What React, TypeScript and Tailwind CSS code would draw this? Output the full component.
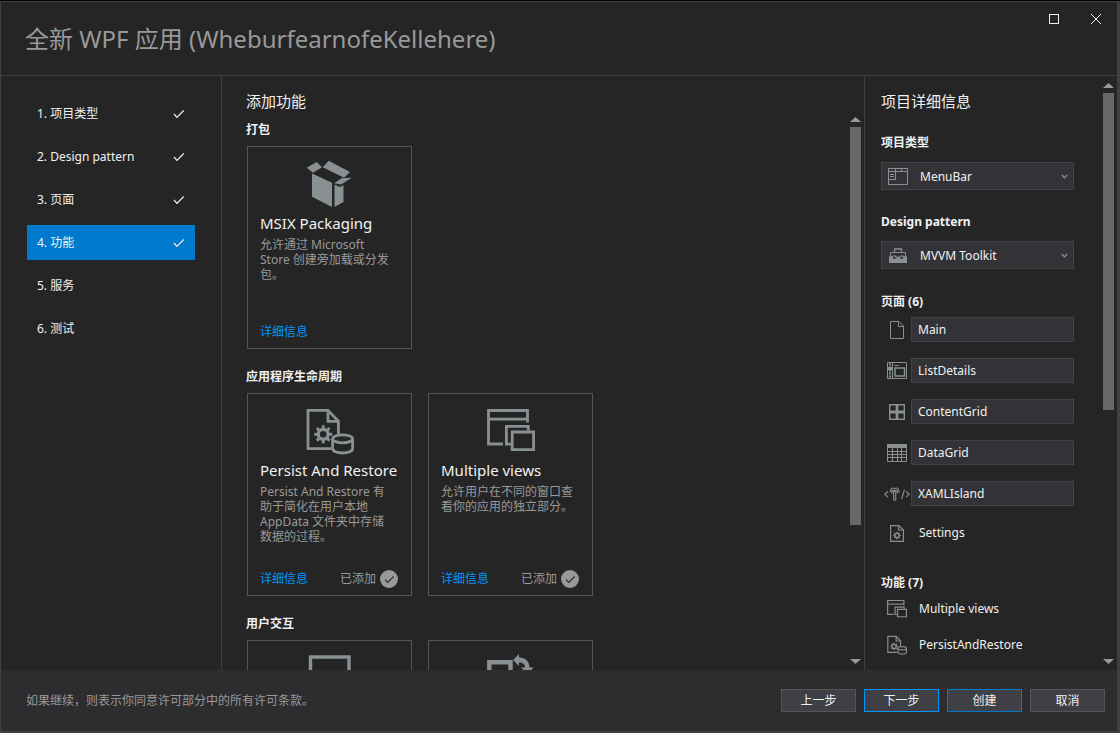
import type { ReactNode } from "react";

type IconProps = { className?: string };

function Gear({ cx, cy, r }: { cx: number; cy: number; r: number }) {
  const teeth = Array.from({ length: 8 }, (_, i) => i * 45);
  return (
    <g>
      <circle cx={cx} cy={cy} r={r * 0.55} fill="none" stroke="currentColor" strokeWidth={r * 0.36} />
      {teeth.map((a) => (
        <rect
          key={a}
          x={cx - r * 0.16}
          y={cy - r}
          width={r * 0.32}
          height={r * 0.4}
          fill="currentColor"
          transform={`rotate(${a} ${cx} ${cy})`}
        />
      ))}
    </g>
  );
}

function PackageIcon({ className }: IconProps) {
  return (
    <svg viewBox="0 0 48 48" className={className} fill="currentColor" aria-hidden="true">
      <path d="M0.7 7.7 10.7 2 16 7.3 7 12.7Z" />
      <path d="M22.7 0.7 44 12 38 17.7 16.8 7.3Z" />
      <path d="M6 13.6 26 22.8V47L6 36.7Z" />
      <path d="M46 17.7 35.5 18.3 28 23.2 35 24.5Z" />
      <path d="M28.5 24.6 33.5 27 37.5 25.3V42L28.5 47Z" />
    </svg>
  );
}

function PersistIcon({ className }: IconProps) {
  return (
    <svg viewBox="0 0 48 48" className={className} fill="none" stroke="currentColor" strokeWidth="2.8" aria-hidden="true">
      <path d="M25 41.6H2V3.4H22L32.4 14V27" />
      <path d="M22 3.4V14.4H32.4" />
      <ellipse cx="36.6" cy="31.8" rx="10" ry="4" />
      <path d="M26.6 31.8V41.5C26.6 44.3 31 46 36.6 46S46.6 44.3 46.6 41.5V31.8" />
      <g stroke="none">
        <Gear cx={17.2} cy={27.3} r={9} />
      </g>
    </svg>
  );
}

function ViewsIcon({ className }: IconProps) {
  return (
    <svg viewBox="0 0 48 48" className={className} fill="none" stroke="currentColor" strokeWidth="2.8" aria-hidden="true">
      <path d="M16 37H1.5V3.5H40.5V15.5" />
      <path d="M1.5 12.2H40.5" />
      <path d="M24 37.2H19.4V19.4H41.3V23.5" />
      <path d="M25.2 25H46.6V42.6H25.2Z" />
    </svg>
  );
}

function FrameIcon({ className }: IconProps) {
  return (
    <svg viewBox="0 0 48 48" className={className} fill="none" stroke="currentColor" strokeWidth="3.4" aria-hidden="true">
      <path d="M4.5 46V3H43V46Z" />
    </svg>
  );
}

function RotateIcon({ className }: IconProps) {
  return (
    <svg viewBox="0 0 48 48" className={className} aria-hidden="true">
      <path d="M2.3 46V8.2H23.5V46Z" fill="none" stroke="currentColor" strokeWidth="4.4" />
      <path d="M26 6 32 0V3.5C38.5 3.5 42.5 7.5 42.5 13.5H46.5L40.5 20 34 13.5H38C38 10.5 36 8.5 32 8.5V12Z" fill="currentColor" />
    </svg>
  );
}

function MenuBarIcon({ className }: IconProps) {
  return (
    <svg viewBox="0 0 20 17" className={className} fill="none" stroke="currentColor" aria-hidden="true">
      <path d="M0.5 0.5H19.5V16.5H0.5ZM0.5 3.5H19.5M7.5 0.5V11.5H0.5M13.5 0.5V3.5M2 6.5H6M2 8.5H6" />
    </svg>
  );
}

function ToolboxIcon({ className }: IconProps) {
  return (
    <svg viewBox="0 0 18 15" className={className} aria-hidden="true">
      <path d="M5.5 4V1H12.5V4" fill="none" stroke="currentColor" strokeWidth="1.3" />
      <path d="M1.500 4.500H16.500V9H14.500V8H11.500V9H6.500V8H3.500V9H1.500Z" fill="none" stroke="currentColor" />
      <path d="M0 8.5H3.5L4.5 11H6L7 9.500H11L12 11H13.5L14.5 8.500H18V15H0Z" fill="currentColor" />
    </svg>
  );
}

function PageIcon({ className }: IconProps) {
  return (
    <svg viewBox="0 0 14 18" className={className} fill="none" stroke="currentColor" aria-hidden="true">
      <path d="M0.5 0.5H9L13.5 5V17.5H0.5ZM8.5 0.5V5.5H13.5" />
    </svg>
  );
}

function ListDetailsIcon({ className }: IconProps) {
  return (
    <svg viewBox="0 0 20 17" className={className} fill="none" stroke="currentColor" aria-hidden="true">
      <path d="M0.5 0.5H19.5V16.5H0.5ZM5.5 0.5V16.5M7.500 3.500H12" />
      <path d="M8 6H17.5V14H8Z" strokeWidth="1.5" />
      <path d="M1 6.5H5" strokeWidth="3" />
      <path d="M3 1.5V16" strokeWidth="2" strokeDasharray="2 1" />
    </svg>
  );
}

function ContentGridIcon({ className }: IconProps) {
  return (
    <svg viewBox="0 0 16 16" className={className} fill="none" stroke="currentColor" strokeWidth="1.4" aria-hidden="true">
      <path d="M0.7 0.7H7.3V7.3H0.7ZM8.700 0.7H15.3V7.3H8.700ZM0.7 8.700H7.3V15.3H0.7ZM8.700 8.700H15.3V15.3H8.700Z" />
    </svg>
  );
}

function DataGridIcon({ className }: IconProps) {
  return (
    <svg viewBox="0 0 20 18" className={className} fill="none" stroke="currentColor" aria-hidden="true">
      <path d="M0 0H20V4H0Z" fill="currentColor" stroke="none" />
      <path d="M0.5 4V17.5H19.5V4M5.5 4V17M10.5 4V17M14.500 4V17M0 7.5H20M0 10.5H20M0 13.500H20" />
    </svg>
  );
}

function IslandIcon({ className }: IconProps) {
  return (
    <svg viewBox="0 0 26 14" className={className} fill="none" stroke="currentColor" strokeWidth="1.1" aria-hidden="true">
      <path d="M4 4.5 0.8 7.3 4 10" />
      <path d="M22 4.5 25.2 7.3 22 10M20.500 2.500 17.500 12" />
      <path d="M10.500 2C9 0 6.500 1 6.300 4.500C8 2.800 9.500 3 10.500 4C11.500 3 13.500 2.800 15 4.500C14.800 1 12.200 0 10.500 2Z" />
      <path d="M7.500 6.500C8 4.500 9.500 4 10.700 4C12 4 13.500 4.500 14 6.500" />
      <path d="M9.700 4.500V13H11.700V4.500" />
    </svg>
  );
}

function SettingsPageIcon({ className }: IconProps) {
  return (
    <svg viewBox="0 0 14 17" className={className} fill="none" stroke="currentColor" aria-hidden="true">
      <path d="M0.6 0.6H9L13.4 5V16.4H0.6ZM8.5 0.6V5H13.4" strokeWidth="1.2" />
      <g stroke="none">
        <Gear cx={7} cy={10.5} r={3.8} />
      </g>
    </svg>
  );
}

function Check({ className }: IconProps) {
  return (
    <svg viewBox="0 0 12 10" className={className} fill="none" stroke="currentColor" strokeWidth="1.2" aria-hidden="true">
      <path d="M1 5 4 8.3 10.7 1.5" />
    </svg>
  );
}

const steps = [
  { label: "1. 项目类型", done: true },
  { label: "2. Design pattern", done: true },
  { label: "3. 页面", done: true },
  { label: "4. 功能", done: true, current: true },
  { label: "5. 服务", done: false },
  { label: "6. 测试", done: false },
];

function ScrollRail({ thumb, className }: { thumb: string; className: string }) {
  return (
    <div className={`flex w-[11px] shrink-0 flex-col items-center ${className}`} aria-hidden="true">
      <svg viewBox="0 0 11 5" className="h-[5px] w-[11px] shrink-0 fill-[#999999]">
        <path d="M5.5 0 11 5H0Z" />
      </svg>
      <div className="my-[5px] min-h-0 w-full flex-1">
        <div className={`w-full bg-[#686868] ${thumb}`} />
      </div>
      <svg viewBox="0 0 11 5" className="h-[5px] w-[11px] shrink-0 fill-[#999999]">
        <path d="M0 0H11L5.5 5Z" />
      </svg>
    </div>
  );
}

function Card({ icon, title, text, added }: { icon: ReactNode; title?: string; text?: string; added?: boolean }) {
  return (
    <article className="flex h-[203px] w-[165px] flex-col border border-[#555555] px-3 pt-[13px] pb-[7px]">
      <div className="flex shrink-0 justify-center text-[#899093]">{icon}</div>
      {title && (
        <>
          <h3 className="mt-[5px] text-[15px] leading-5 whitespace-nowrap text-[#f1f1f1]">{title}</h3>
          <p className="mt-1 pr-[5px] text-[12px] leading-[15px] text-[#999999]">{text}</p>
          <div className="mt-auto flex h-[18px] items-center pr-px text-[12px]">
            <a href="#details" className="text-[#0097fb]">
              详细信息
            </a>
            {added && (
              <span className="ml-auto flex items-center gap-1 text-[#999999]">
                已添加
                <span className="flex size-[18px] items-center justify-center rounded-full bg-[#999999] text-[#252526]">
                  <Check className="h-[9px] w-[11px]" />
                </span>
              </span>
            )}
          </div>
        </>
      )}
    </article>
  );
}

function Section({ title, children }: { title: string; children: ReactNode }) {
  return (
    <section className="mb-[18px]">
      <h2 className="mb-[6px] text-[12px] leading-5 font-bold text-[#f1f1f1]">{title}</h2>
      <div className="flex flex-wrap gap-4 pl-px">{children}</div>
    </section>
  );
}

function Picker({ id, label, value, icon }: { id: string; label: string; value: string; icon: ReactNode }) {
  return (
    <div className="mt-[22px] last:mt-[22px]">
      <label htmlFor={id} className="block text-[12px] leading-5 font-bold">
        {label}
      </label>
      <div className="mt-[9px] flex h-7 items-center border border-[#434346] bg-[#333337] pr-[5px] pl-[6px]">
        <span className="flex w-5 shrink-0 justify-center text-[#899093]">{icon}</span>
        <select id={id} className="ml-3 h-full min-w-0 flex-1 appearance-none bg-transparent pt-px text-[12px] outline-none">
          <option>{value}</option>
        </select>
        <svg viewBox="0 0 7 5" className="h-[5px] w-[7px] fill-none stroke-[#999999]" aria-hidden="true">
          <path d="M0.8 0.8 3.5 3.8 6.2 0.8" strokeWidth="1.2" />
        </svg>
      </div>
    </div>
  );
}

const pages = [
  { name: "Main", icon: <PageIcon className="h-[18px] w-[14px]" /> },
  { name: "ListDetails", icon: <ListDetailsIcon className="h-[17px] w-5" /> },
  { name: "ContentGrid", icon: <ContentGridIcon className="size-4" /> },
  { name: "DataGrid", icon: <DataGridIcon className="h-[18px] w-5" /> },
  { name: "XAMLIsland", icon: <IslandIcon className="h-[14px] w-[26px]" /> },
];

function PlainRow({ icon, name }: { icon: ReactNode; name: string }) {
  return (
    <li className="flex h-[22px] items-center">
      <span className="flex w-[30px] shrink-0 justify-center pl-0.5 text-[#899093]">{icon}</span>
      <span className="pl-2">{name}</span>
    </li>
  );
}

const buttons = [
  { label: "上一步", border: "border-[#555555]" },
  { label: "下一步", border: "border-[#0097fb]" },
  { label: "创建", border: "border-[#007acc]" },
  { label: "取消", border: "border-[#555555]" },
];

export default function App() {
  return (
    <div className="h-screen bg-black pt-px font-['Noto_Sans','Noto_Sans_CJK_SC',sans-serif] text-[12px] text-[#f1f1f1]">
      <div className="flex h-full flex-col border-t border-r-3 border-b-2 border-l border-[#3f3f46] bg-[#252526]">
        <header className="flex h-[74px] shrink-0 items-center border-b border-[#3f3f46] pl-6">
          <h1 className="text-[24px] leading-8 whitespace-nowrap text-[#999999]">全新 WPF 应用 (WheburfearnofeKellehere)</h1>
          <div className="ml-auto flex self-start">
            <button type="button" aria-label="最大化" className="flex h-[34px] w-[42px] items-center justify-center">
              <span className="size-[10px] border border-[#f1f1f1]" />
            </button>
            <button type="button" aria-label="关闭" className="flex h-[34px] w-[42px] items-center justify-center">
              <svg viewBox="0 0 10 10" className="size-[10px] stroke-[#f1f1f1]" aria-hidden="true">
                <path d="M0 0 10 10M10 0 0 10" />
              </svg>
            </button>
          </div>
        </header>

        <div className="flex min-h-0 flex-1">
          <nav className="flex w-[221px] shrink-0 flex-col gap-2 border-r border-[#3f3f46] pt-5 pr-[26px] pl-[26px]">
            {steps.map((s) => (
              <button
                key={s.label}
                type="button"
                aria-current={s.current ? "step" : undefined}
                className={`flex h-[35px] items-center justify-between pr-[10px] pl-[10px] ${s.current ? "bg-[#007acc]" : ""}`}
              >
                {s.label}
                {s.done && <Check className="h-[10px] w-3" />}
              </button>
            ))}
          </nav>

          <main className="flex min-w-0 flex-1 flex-col pt-[15px] pl-6">
            <h2 className="text-[15px] leading-5">添加功能</h2>
            <div className="mt-[6px] flex min-h-0 flex-1">
              <div className="min-w-0 flex-1 overflow-hidden pt-[3px]">
                <Section title="打包">
                  <Card icon={<PackageIcon className="size-12" />} title="MSIX Packaging" text="允许通过 Microsoft Store 创建旁加载或分发包。" />
                </Section>
                <Section title="应用程序生命周期">
                  <Card
                    icon={<PersistIcon className="size-12" />}
                    title="Persist And Restore"
                    text="Persist And Restore 有助于简化在用户本地 AppData 文件夹中存储数据的过程。"
                    added
                  />
                  <Card icon={<ViewsIcon className="size-12" />} title="Multiple views" text="允许用户在不同的窗口查看你的应用的独立部分。" added />
                </Section>
                <Section title="用户交互">
                  <Card icon={<FrameIcon className="size-12" />} />
                  <Card icon={<RotateIcon className="size-12" />} />
                </Section>
              </div>
              <ScrollRail thumb="h-[75.5%]" className="mr-[3px] pb-[6px]" />
            </div>
          </main>

          <aside className="flex w-[253px] shrink-0 border-l border-[#3f3f46] pl-4">
            <div className="min-w-0 flex-1 overflow-hidden pt-[15px] pr-[29px]">
              <h2 className="text-[15px] leading-5">项目详细信息</h2>
              <Picker id="project-type" label="项目类型" value="MenuBar" icon={<MenuBarIcon className="h-[17px] w-5" />} />
              <Picker id="design-pattern" label="Design pattern" value="MVVM Toolkit" icon={<ToolboxIcon className="h-[15px] w-[18px]" />} />
              <h3 className="mt-[23px] mb-[5px] leading-5 font-bold">页面 (6)</h3>
              <ul className="flex flex-col gap-4">
                {pages.map((p) => (
                  <li key={p.name} className="flex h-[25px] items-center">
                    <span className="flex w-[30px] shrink-0 justify-center pl-0.5 text-[#899093]">{p.icon}</span>
                    <input
                      aria-label={p.name}
                      defaultValue={p.name}
                      className="h-full min-w-0 flex-1 border border-[#434346] bg-[#333337] px-[6px] outline-none"
                    />
                  </li>
                ))}
                <PlainRow name="Settings" icon={<SettingsPageIcon className="h-[17px] w-[14px]" />} />
              </ul>
              <h3 className="mt-[29px] mb-[5px] leading-5 font-bold">功能 (7)</h3>
              <ul className="flex flex-col gap-[14px]">
                <PlainRow name="Multiple views" icon={<ViewsIcon className="size-5" />} />
                <PlainRow name="PersistAndRestore" icon={<PersistIcon className="size-5" />} />
              </ul>
            </div>
            <ScrollRail thumb="h-[56.5%]" className="mr-[3px] pt-[7px] pb-[6px]" />
          </aside>
        </div>

        <footer className="flex h-[61px] shrink-0 items-center bg-[#2d2d30] pr-3 pl-[25px]">
          <p className="text-[#999999]">如果继续，则表示你同意许可部分中的所有许可条款。</p>
          <div className="ml-auto flex gap-2">
            {buttons.map((b) => (
              <button key={b.label} type="button" className={`h-[23px] w-[75px] border bg-[#3f3f46] leading-5 ${b.border}`}>
                {b.label}
              </button>
            ))}
          </div>
        </footer>
      </div>
    </div>
  );
}
